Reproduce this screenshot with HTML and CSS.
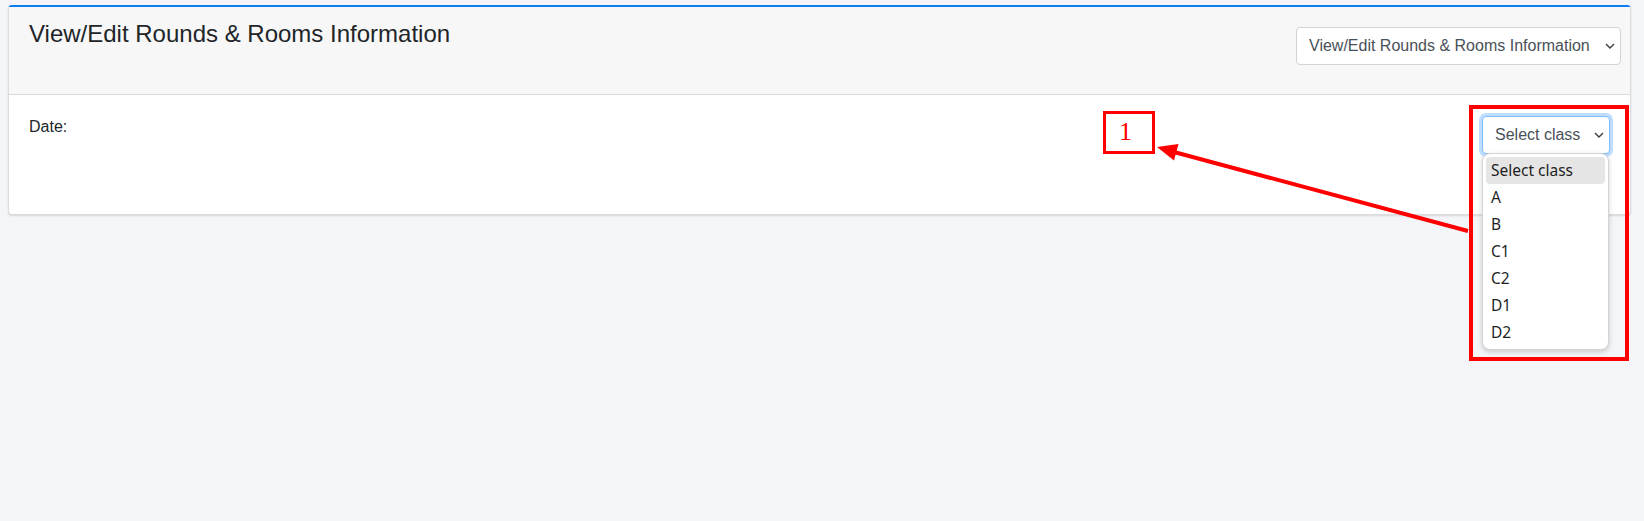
FILE: index.html
```html
<!DOCTYPE html>
<html lang="en">
<head>
<meta charset="utf-8">
<title>View/Edit Rounds &amp; Rooms Information</title>
<link rel="stylesheet" href="styles.css">
</head>
<body>
<div class="page">
  <div class="card">
    <div class="card-header">
      <h4 class="title">View/Edit Rounds &amp; Rooms Information</h4>
      <div class="select select-wide">
        <span class="select-text">View/Edit Rounds &amp; Rooms Information</span>
        <svg class="chevron" width="10" height="6" viewBox="0 0 10 6"><polyline points="1,1 5,5 9,1" fill="none" stroke="#3c3c3c" stroke-width="1.4"/></svg>
      </div>
    </div>
    <div class="card-body">
      <div class="date">Date:</div>
      <div class="select-wrap">
        <div class="select select-focus">
          <span class="select-text">Select class</span>
          <svg class="chevron" width="10" height="6" viewBox="0 0 10 6"><polyline points="1,1 5,5 9,1" fill="none" stroke="#3c3c3c" stroke-width="1.4"/></svg>
        </div>
        <ul class="dropdown">
          <li class="option active">Select class</li>
          <li class="option">A</li>
          <li class="option">B</li>
          <li class="option">C1</li>
          <li class="option">C2</li>
          <li class="option">D1</li>
          <li class="option">D2</li>
        </ul>
      </div>
    </div>
  </div>

  <div class="anno-box"></div>
  <div class="anno-label">1</div>
  <svg class="anno-arrow" width="1644" height="521" viewBox="0 0 1644 521">
    <line x1="1468" y1="231" x2="1174" y2="152" stroke="#ff0000" stroke-width="4"/>
    <polygon points="1157,147 1174,160.5 1178.5,144" fill="#ff0000"/>
  </svg>
</div>
</body>
</html>
```

FILE: styles.css
```css
html, body {
  margin: 0;
  padding: 0;
  background: #f4f5f8;
}

body {
  font-family: "Liberation Sans", Arial, sans-serif;
  color: #212529;
}

.page {
  position: relative;
  width: 1644px;
  height: 521px;
  padding-top: 5px;
  box-sizing: border-box;
}

.card {
  margin-left: 8px;
  width: 1623px;
  background: #ffffff;
  border: 1px solid #dcdcdc;
  border-top: 2px solid #0b7cf2;
  border-radius: 4px;
  box-shadow: 0 1px 2px rgba(0, 0, 0, 0.12);
  box-sizing: border-box;
}

.card-header {
  display: flex;
  justify-content: space-between;
  align-items: flex-start;
  height: 88px;
  box-sizing: border-box;
  padding: 13px 9px 0 20px;
  background: #f7f7f7;
  border-bottom: 1px solid #dadada;
}

.title {
  margin: 0;
  font-size: 24px;
  font-weight: 400;
  line-height: 28.8px;
  color: #212529;
}

.select {
  display: flex;
  align-items: center;
  justify-content: space-between;
  height: 38px;
  box-sizing: border-box;
  background: #ffffff;
  border: 1px solid #ced4da;
  border-radius: 4px;
  padding: 0 5px 0 12px;
  font-size: 16px;
  color: #495057;
}

.select-wide {
  width: 325px;
  margin-top: 7px;
}

.select-text {
  white-space: nowrap;
}

.chevron {
  flex: none;
}

.card-body {
  display: flex;
  justify-content: space-between;
  align-items: flex-start;
  height: 119px;
  box-sizing: border-box;
  padding: 21px 20px 0 20px;
}

.date {
  font-size: 16px;
  line-height: 24px;
  margin-top: -1px;
  color: #212529;
}

.select-wrap {
  position: relative;
  width: 128px;
}

.select-focus {
  width: 128px;
  border-color: #80bdff;
  box-shadow: 0 0 0 3px rgba(0, 123, 255, 0.25);
}

.dropdown {
  position: absolute;
  top: 37px;
  left: 0;
  width: 127px;
  margin: 0;
  padding: 3px;
  list-style: none;
  box-sizing: border-box;
  background: #ffffff;
  border: 1px solid #d4d4d4;
  border-radius: 8px;
  box-shadow: 0 2px 5px rgba(0, 0, 0, 0.18);
  z-index: 2;
}

.option {
  height: 27px;
  line-height: 27px;
  padding-left: 5px;
  border-radius: 4px;
  font-family: "Noto Sans", "Open Sans", sans-serif;
  font-size: 15.5px;
  color: #1f1f1f;
}

.option.active {
  background: #e5e5e5;
}

.anno-box {
  position: absolute;
  left: 1469px;
  top: 105px;
  width: 160px;
  height: 256px;
  box-sizing: border-box;
  border: 4px solid #ff0000;
  z-index: 3;
}

.anno-label {
  position: absolute;
  left: 1103px;
  top: 111px;
  width: 52px;
  height: 43px;
  box-sizing: border-box;
  border: 3px solid #ff0000;
  background: #ffffff;
  padding-left: 13px;
  font-family: "Liberation Serif", "Times New Roman", serif;
  font-size: 26px;
  line-height: 35px;
  color: #ff0000;
  z-index: 3;
}

.anno-arrow {
  position: absolute;
  left: 0;
  top: 0;
  pointer-events: none;
  z-index: 4;
}
```
